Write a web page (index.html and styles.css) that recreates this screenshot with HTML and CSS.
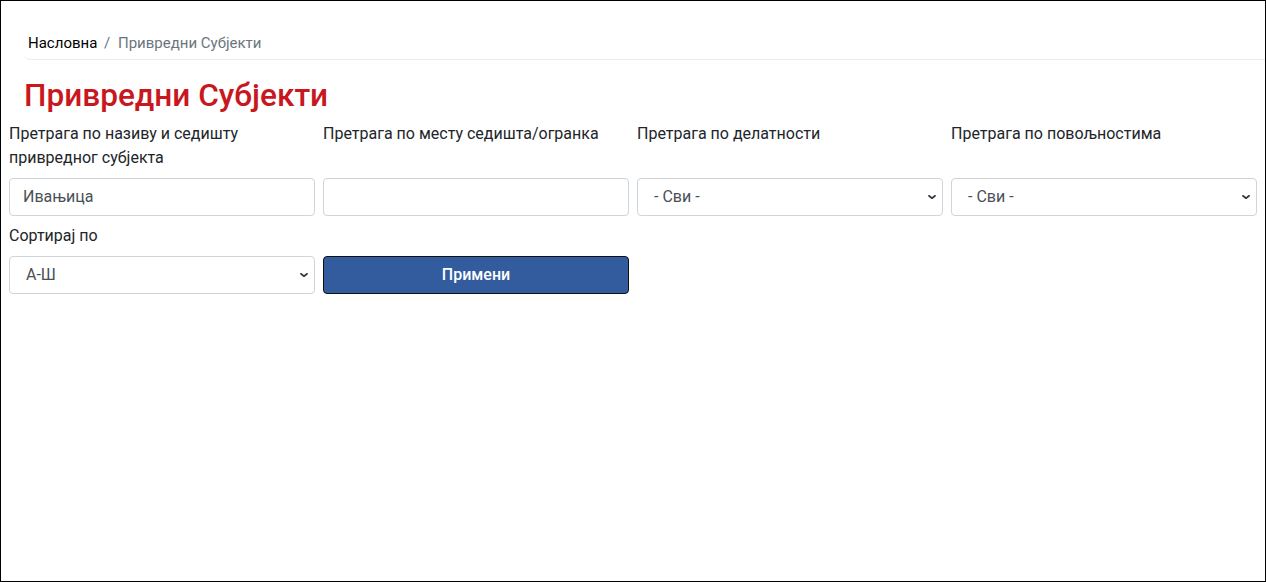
FILE: index.html
```html
<!DOCTYPE html>
<html lang="sr">
<head>
    <meta charset="UTF-8">
    <meta name="viewport" content="width=device-width, initial-scale=1.0">
    <title>Привредни Субјекти</title>
    <link rel="stylesheet" href="styles.css">
</head>
<body>
    <div class="page">
        <header class="page-head">
            <nav class="breadcrumb">
                <a href="#">Насловна</a>
                <span class="sep">/</span>
                <span class="current">Привредни Субјекти</span>
            </nav>
            <h1>Привредни Субјекти</h1>
        </header>

        <form class="filters">
            <div class="field">
                <label for="naziv">Претрага по називу и седишту привредног субјекта</label>
                <input type="text" id="naziv" value="Ивањица">
            </div>
            <div class="field">
                <label for="mesto">Претрага по месту седишта/огранка</label>
                <input type="text" id="mesto">
            </div>
            <div class="field">
                <label for="delatnost">Претрага по делатности</label>
                <select id="delatnost">
                    <option>- Сви -</option>
                </select>
            </div>
            <div class="field">
                <label for="povoljnosti">Претрага по повољностима</label>
                <select id="povoljnosti">
                    <option>- Сви -</option>
                </select>
            </div>
            <div class="field">
                <label for="sort">Сортирај по</label>
                <select id="sort">
                    <option>А-Ш</option>
                    <option>Ш-А</option>
                </select>
            </div>
            <div class="field field-button">
                <button type="button">Примени</button>
            </div>
        </form>
    </div>
</body>
</html>
```

FILE: styles.css
```css
/* Global styles */
* {
    box-sizing: border-box;
}

body {
    margin: 0;
    font-family: 'Roboto', 'Liberation Sans', sans-serif;
    color: #212529;
    background: #fff;
}

.page {
    height: 582px;
    border: 1px solid #000;
    padding: 0 8px;
}

/* Breadcrumb and title */
.page-head {
    padding-left: 15px;
}

.breadcrumb {
    margin-top: 32px;
    padding: 0 4px 5px;
    font-size: 15px;
    line-height: 21px;
    border-bottom: 1px solid #e9ecef;
    border-radius: 0 0 0 6px;
    margin-right: -8px;
}

.breadcrumb a {
    color: #000;
    text-decoration: none;
}

.breadcrumb .sep {
    color: #6c757d;
    padding: 0 4px 0 3px;
}

.breadcrumb .current {
    color: #6c757d;
}

.page-head h1 {
    margin: 17px 0 7px;
    font-size: 31.6px;
    font-weight: 500;
    line-height: 1.2;
    color: #c8171e;
}

/* Filter form */
.filters {
    display: grid;
    grid-template-columns: repeat(4, 1fr);
    column-gap: 8px;
    row-gap: 8px;
}

.field label {
    display: block;
    margin-bottom: 8px;
    font-size: 16px;
    line-height: 24px;
}

.field:nth-child(-n+4) label {
    min-height: 48px;
}

.field input,
.field select {
    display: block;
    width: 100%;
    height: 38px;
    padding: 6px 13px;
    font-family: inherit;
    font-size: 16px;
    color: #495057;
    background: #fff;
    border: 1px solid #ced4da;
    border-radius: 4px;
}

.field select {
    appearance: none;
    padding: 6px 28px 6px 16px;
    background-image: url("data:image/svg+xml,%3csvg xmlns='http://www.w3.org/2000/svg' viewBox='0 0 16 16'%3e%3cpath fill='none' stroke='%23343a40' stroke-linecap='round' stroke-linejoin='round' stroke-width='2.6' d='M3 6l5 4 5-4'/%3e%3c/svg%3e");
    background-repeat: no-repeat;
    background-position: right 5px center;
    background-size: 10px 10px;
}

.field-button {
    display: flex;
    align-items: flex-end;
}

.field-button button {
    width: 100%;
    height: 38px;
    font-family: inherit;
    font-size: 16px;
    font-weight: 500;
    color: #fff;
    background: #335c9f;
    border: 1px solid #111;
    border-radius: 4px;
    cursor: pointer;
}
```
